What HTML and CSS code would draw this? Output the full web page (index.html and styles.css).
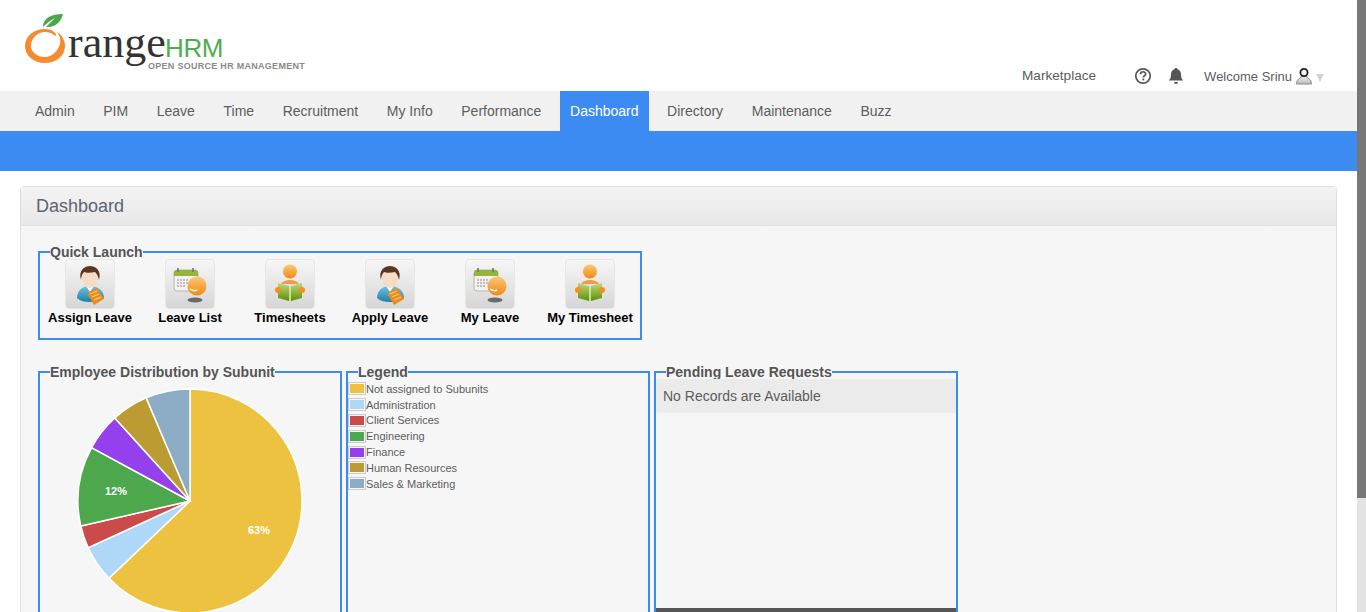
FILE: index.html
```html
<!DOCTYPE html>
<html lang="en">
<head>
<meta charset="UTF-8">
<meta name="viewport" content="width=device-width, initial-scale=1.0">
<title>OrangeHRM</title>
<link rel="stylesheet" href="styles.css">
</head>
<body>
<svg class="defs" width="0" height="0">
    <defs>
        <linearGradient id="ballGrad" x1="0" y1="0" x2="0" y2="1">
            <stop offset="0" stop-color="#fcc878"/>
            <stop offset="1" stop-color="#f08a12"/>
        </linearGradient>
        <linearGradient id="bookGrad" x1="0" y1="0" x2="0" y2="1">
            <stop offset="0" stop-color="#c2d77a"/>
            <stop offset="1" stop-color="#5f8f0c"/>
        </linearGradient>
        <linearGradient id="shirtGrad" x1="0" y1="0" x2="0" y2="1">
            <stop offset="0" stop-color="#6cc4e4"/>
            <stop offset="1" stop-color="#1d7fa8"/>
        </linearGradient>
        <linearGradient id="cloakGrad" x1="0" y1="0" x2="0" y2="1">
            <stop offset="0" stop-color="#f0f0ec"/>
            <stop offset="1" stop-color="#bcbcb8"/>
        </linearGradient>
        <symbol id="icon-person" viewBox="0 0 48 48">
            <path d="M11 38c0-8 6-12 13-12s14 4 14 12c-4 3-9 4-14 4s-10-1-13-4z" fill="url(#shirtGrad)"/>
            <path d="M20 26l4 6 4-6z" fill="#fff"/>
            <ellipse cx="24" cy="18" rx="8" ry="10" fill="#f6dcc4"/>
            <path d="M15 20c-3-10 4-14 9-14s12 4 9 14c-1-4-2-6-4-8-4 1-9 1-11 0-2 2-3 5-3 8z" fill="#5a3722"/>
            <path d="M21 33l10-5 7 11-10 6z" fill="#ee8a1c"/>
            <path d="M24 34l7-3M26 37l7-3M28 40l7-3" stroke="#fbd08a" stroke-width="1.2"/>
        </symbol>
        <symbol id="icon-calendar" viewBox="0 0 48 48">
            <rect x="8" y="10" width="24" height="21" rx="3" fill="#f2f2ee" stroke="#b8b8b0"/>
            <path d="M8 16v-3a3 3 0 0 1 3-3h18a3 3 0 0 1 3 3v3z" fill="#94b53a"/>
            <path d="M12 8v4M27 8v4" stroke="#777" stroke-width="1.600"/>
            <path d="M11 20h2m1 0h2m1 0h2m1 0h2M11 23h2m1 0h2m1 0h2m1 0h2M11 26h2m1 0h2m1 0h2" stroke="#b9aaa8" stroke-width="1.600"/>
            <ellipse cx="29" cy="40" rx="7.500" ry="2.500" fill="#444" opacity=".75"/>
            <circle cx="31" cy="26" r="9.500" fill="url(#ballGrad)"/>
            <path d="M24 29c2 1.500 5 2 7 1" stroke="#fff" stroke-width="1.500" fill="none"/>
        </symbol>
        <symbol id="icon-reader" viewBox="0 0 48 48">
            <path d="M15 24c2-3 5-4 9-4s7 1 9 4z" fill="#f39a4a"/>
            <circle cx="24" cy="11.500" r="7" fill="url(#ballGrad)"/>
            <path d="M12 23l11 3h2l11-3v15l-11 3h-2l-11-3z" fill="url(#bookGrad)"/>
            <path d="M24 26v15" stroke="#e4efb6" stroke-width="1.500"/>
            <circle cx="12" cy="30" r="3" fill="#f2901a"/>
            <circle cx="36" cy="30" r="3" fill="#f2901a"/>
        </symbol>
    </defs>
</svg>

<div class="window">
    <div class="page">
        <header class="topbar">
            <svg class="logo" width="290" height="66" viewBox="0 0 290 66">
                <path d="M20 17C9 17 0 24 0 34c0 10 9 17 20 17s20-7 20-17c0-6-3-11-8-14 3 4 4 8 3 12-2 7-8 13-15 13-8 0-14-5-14-11 0-8 7-14 14-14 4 0 7 1 10 4 2-1 1-3-1-4-2-2-5-3-9-3z" fill="#f58b2e"/>
                <path d="M18 15c0-9 8-13 20-13-2 8-8 14-17 13 3-3 6-6 9-9-4 2-8 5-12 9z" fill="#4aa84a"/>
                <text class="logo-word" x="43" y="45">range</text>
                <text class="logo-hrm" x="140" y="45">HRM</text>
                <text class="logo-tag" x="123" y="57">OPEN SOURCE HR MANAGEMENT</text>
            </svg>
            <nav class="user-links">
                <a class="market-link">Marketplace</a>
                <svg class="help-icon" width="18" height="18" viewBox="0 0 18 18">
                    <circle cx="9" cy="9" r="7.200" fill="none" stroke="#555" stroke-width="1.700"/>
                    <path d="M6.500 7.200c0-3.200 5.200-3.200 5.200-.2 0 1.800-2.400 1.800-2.400 3.600" fill="none" stroke="#555" stroke-width="1.700"/>
                    <rect x="8.400" y="11.600" width="1.800" height="1.800" fill="#555"/>
                </svg>
                <svg class="bell-icon" width="16" height="18" viewBox="0 0 16 18">
                    <path d="M8 1c.9 0 1.400.5 1.500 1.300 2.500.7 3.500 2.700 3.500 5.200 0 3 .7 4.500 2.200 6H.8C2.300 12 3 10.500 3 7.500c0-2.500 1-4.500 3.500-5.200C6.600 1.500 7.100 1 8 1z" fill="#555"/>
                    <path d="M6 15h4a2 2 0 0 1-4 0z" fill="#555"/>
                </svg>
                <span class="welcome">Welcome Srinu</span>
                <svg class="avatar-icon" width="16" height="18" viewBox="0 0 16 18">
                    <path d="M.5 17c0-4 2-5 4-6l1-2h5l1 2c2 1 4 2 4 6z" fill="url(#cloakGrad)" stroke="#8a8a86"/>
                    <circle cx="8" cy="5.500" r="3.600" fill="#f4f4f4" stroke="#222" stroke-width="1.800"/>
                </svg>
                <span class="caret"></span>
            </nav>
        </header>

        <ul class="main-menu">
            <li>Admin</li>
            <li>PIM</li>
            <li>Leave</li>
            <li>Time</li>
            <li>Recruitment</li>
            <li>My Info</li>
            <li>Performance</li>
            <li class="active">Dashboard</li>
            <li>Directory</li>
            <li>Maintenance</li>
            <li>Buzz</li>
        </ul>
        <div class="sub-menu"></div>

        <section class="box">
            <h1 class="box-head">Dashboard</h1>
            <div class="box-body">
                <fieldset class="panel quick-launch">
                    <legend>Quick Launch</legend>
                    <a class="quick-item">
                        <span class="quick-icon"><svg width="48" height="48"><use href="#icon-person"/></svg></span>
                        Assign Leave
                    </a>
                    <a class="quick-item">
                        <span class="quick-icon"><svg width="48" height="48"><use href="#icon-calendar"/></svg></span>
                        Leave List
                    </a>
                    <a class="quick-item">
                        <span class="quick-icon"><svg width="48" height="48"><use href="#icon-reader"/></svg></span>
                        Timesheets
                    </a>
                    <a class="quick-item">
                        <span class="quick-icon"><svg width="48" height="48"><use href="#icon-person"/></svg></span>
                        Apply Leave
                    </a>
                    <a class="quick-item">
                        <span class="quick-icon"><svg width="48" height="48"><use href="#icon-calendar"/></svg></span>
                        My Leave
                    </a>
                    <a class="quick-item">
                        <span class="quick-icon"><svg width="48" height="48"><use href="#icon-reader"/></svg></span>
                        My Timesheet
                    </a>
                </fieldset>

                <div class="widgets">
                    <fieldset class="panel widget">
                        <legend>Employee Distribution by Subunit</legend>
                        <svg class="pie" width="228" height="228" viewBox="-114 -114 228 228">
                            <g stroke="#fff" stroke-width="1.500">
                                <path d="M0 0V-112A112 112 0 1 1 -81 77.300Z" fill="#edc240"/>
                                <path d="M0 0L-81 77.300A112 112 0 0 1 -101.800 46.800Z" fill="#afd8f8"/>
                                <path d="M0 0L-101.800 46.800A112 112 0 0 1 -109.200 25Z" fill="#cb4b4b"/>
                                <path d="M0 0L-109.200 25A112 112 0 0 1 -98.400 -53.400Z" fill="#4da74d"/>
                                <path d="M0 0L-98.400 -53.400A112 112 0 0 1 -75.200 -83Z" fill="#9440ed"/>
                                <path d="M0 0L-75.200 -83A112 112 0 0 1 -43.800 -103.100Z" fill="#bd9b33"/>
                                <path d="M0 0L-43.800 -103.100A112 112 0 0 1 0 -112Z" fill="#8cacc6"/>
                            </g>
                            <text class="pie-label" x="69" y="33">63%</text>
                            <text class="pie-label" x="-74" y="-6">12%</text>
                        </svg>
                    </fieldset>

                    <fieldset class="panel widget legend-panel">
                        <legend>Legend</legend>
                        <ul class="legend-list">
                            <li><span class="swatch swatch-1"></span>Not assigned to Subunits</li>
                            <li><span class="swatch swatch-2"></span>Administration</li>
                            <li><span class="swatch swatch-3"></span>Client Services</li>
                            <li><span class="swatch swatch-4"></span>Engineering</li>
                            <li><span class="swatch swatch-5"></span>Finance</li>
                            <li><span class="swatch swatch-6"></span>Human Resources</li>
                            <li><span class="swatch swatch-7"></span>Sales &amp; Marketing</li>
                        </ul>
                    </fieldset>

                    <fieldset class="panel widget pending-panel">
                        <legend>Pending Leave Requests</legend>
                        <div class="pending-list">
                            <div class="no-records">No Records are Available</div>
                        </div>
                        <div class="pending-foot"></div>
                    </fieldset>
                </div>
            </div>
        </section>
    </div>
    <div class="scrollbar"><div class="scroll-thumb"></div></div>
</div>
</body>
</html>
```

FILE: styles.css
```css
/* page frame */
html, body {
    margin: 0;
    height: 100%;
    overflow: hidden;
}
body {
    font-family: "Liberation Sans", Arial, sans-serif;
    font-size: 14px;
    color: #5d5d5d;
    background-color: #fff;
}
.defs {
    position: absolute;
}
.window {
    display: flex;
    height: 612px;
}
.page {
    flex: 1;
    min-width: 0;
    overflow: hidden;
}
.scrollbar {
    width: 9px;
    background-color: #e3e3e3;
}
.scroll-thumb {
    height: 498px;
    background-color: #777;
}

/* header */
.topbar {
    display: flex;
    justify-content: space-between;
    height: 91px;
}
.logo {
    margin: 12px 0 0 25px;
}
.logo-word {
    font-family: "Liberation Serif", serif;
    font-size: 44px;
    fill: #333;
}
.logo-hrm {
    font-size: 26px;
    letter-spacing: -0.4px;
    fill: #4eae4e;
}
.logo-tag {
    font-size: 9px;
    font-weight: bold;
    letter-spacing: 0.28px;
    fill: #8a8a8a;
}
.user-links {
    display: flex;
    align-items: center;
    height: 24px;
    margin: 64px 33px 0 0;
}
.market-link {
    margin: 0 38px 2px 0;
    font-size: 13.6px;
}
.help-icon {
    margin-right: 16px;
}
.bell-icon {
    margin-right: 20px;
}
.welcome {
    margin-right: 4px;
    font-size: 13px;
}
.caret {
    width: 0;
    height: 0;
    margin: 3px 0 0 4px;
    border-left: 4px solid transparent;
    border-right: 4px solid transparent;
    border-top: 8px solid #d4d4d4;
}

/* menu */
.main-menu {
    display: flex;
    gap: 7.6px;
    height: 40px;
    margin: 0;
    padding: 0 0 0 24.5px;
    list-style: none;
    background-color: #f1f1f1;
}
.main-menu li {
    padding: 0 10.5px;
    line-height: 40px;
}
.main-menu .active {
    color: #fff;
    background-color: #3b8bf3;
}
.sub-menu {
    height: 40px;
    background-color: #3b8bf3;
}

/* dashboard box */
.box {
    margin: 15px 20px 0;
    border: 1px solid #dedede;
    border-radius: 4px;
    background-color: #f6f6f6;
}
.box-head {
    height: 38px;
    margin: 0;
    padding-left: 15px;
    font-size: 18px;
    font-weight: normal;
    line-height: 38px;
    color: #5d6570;
    background: linear-gradient(#f3f3f3, #e8e8e8);
    border-bottom: 1px solid #dedede;
}
.box-body {
    padding: 18px 17px 0;
}

/* blue panels */
.panel {
    box-sizing: border-box;
    margin: 0;
    min-width: 0;
    border: 2px solid #3b8bf3;
    background-color: transparent;
}
.panel legend {
    padding: 0;
    margin-left: 10px;
    font-size: 14px;
    font-weight: bold;
    color: #555;
}
.quick-launch {
    display: flex;
    width: 604px;
    height: 96px;
    padding: 0;
}
.quick-item {
    display: flex;
    flex-direction: column;
    align-items: center;
    width: 100px;
    margin-top: -1px;
    font-size: 13px;
    font-weight: bold;
    color: #000;
    white-space: nowrap;
}
.quick-icon {
    display: flex;
    align-items: center;
    justify-content: center;
    box-sizing: border-box;
    width: 50px;
    height: 50px;
    margin-bottom: 1px;
    border: 1px solid #e8e8e2;
    border-radius: 4px;
    background: linear-gradient(#f6f6f6, #d6d6d6);
}

/* widgets row */
.widgets {
    display: flex;
    gap: 4px;
    margin-top: 24px;
}
.widget {
    width: 304px;
    height: 300px;
    padding: 0;
}
.pie {
    display: block;
    margin: 7px 0 0 36px;
}
.pie-label {
    font-size: 11px;
    font-weight: bold;
    text-anchor: middle;
    fill: #fff;
}
.legend-list {
    margin: 1px 0 0;
    padding: 0;
    list-style: none;
    font-size: 11px;
}
.legend-list li {
    display: flex;
    align-items: center;
    height: 15.8px;
}
.swatch {
    box-sizing: border-box;
    width: 18px;
    height: 13px;
    padding: 1px;
    border: 1px solid #ccc;
    background-clip: content-box;
}
.swatch-1 { background-color: #edc240; }
.swatch-2 { background-color: #afd8f8; }
.swatch-3 { background-color: #cb4b4b; }
.swatch-4 { background-color: #4da74d; }
.swatch-5 { background-color: #9440ed; }
.swatch-6 { background-color: #bd9b33; }
.swatch-7 { background-color: #8cacc6; }
.pending-panel {
    display: flex;
    flex-direction: column;
}
.pending-list {
    height: 229px;
    margin-top: -1px;
}
.no-records {
    height: 34px;
    padding-left: 7px;
    line-height: 34px;
    background-color: #ebebeb;
}
.pending-foot {
    height: 40px;
    background-color: #555;
}
```
